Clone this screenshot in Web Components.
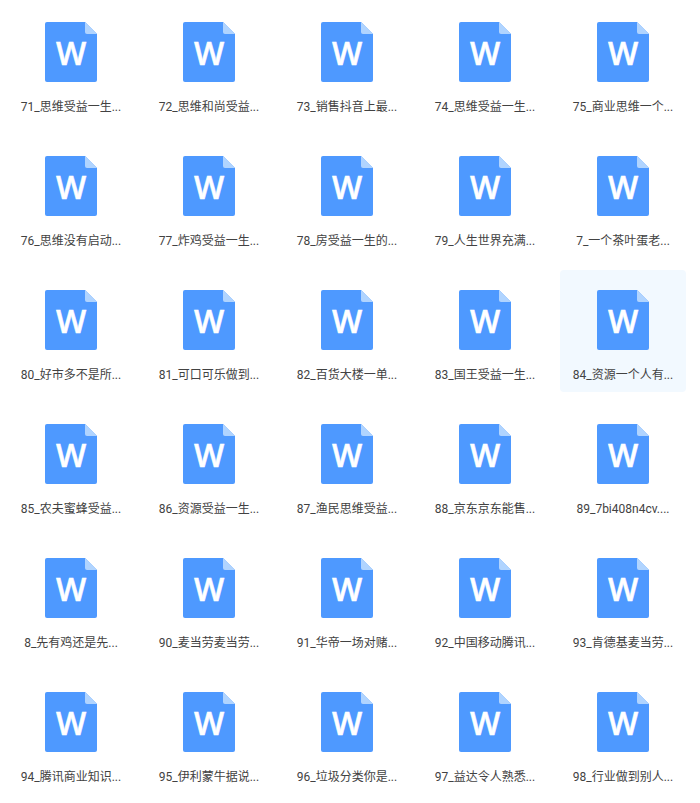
<!DOCTYPE html>
<html lang="zh">
<head>
<meta charset="utf-8">
<title>文件列表</title>
<style>
  html, body { margin: 0; background: #fff; overflow: hidden; }
</style>
</head>
<body>
<file-grid>
  <file-item name="71_思维受益一生..."></file-item>
  <file-item name="72_思维和尚受益..."></file-item>
  <file-item name="73_销售抖音上最..."></file-item>
  <file-item name="74_思维受益一生..."></file-item>
  <file-item name="75_商业思维一个..."></file-item>
  <file-item name="76_思维没有启动..."></file-item>
  <file-item name="77_炸鸡受益一生..."></file-item>
  <file-item name="78_房受益一生的..."></file-item>
  <file-item name="79_人生世界充满..."></file-item>
  <file-item name="7_一个茶叶蛋老..."></file-item>
  <file-item name="80_好市多不是所..."></file-item>
  <file-item name="81_可口可乐做到..."></file-item>
  <file-item name="82_百货大楼一单..."></file-item>
  <file-item name="83_国王受益一生..."></file-item>
  <file-item name="84_资源一个人有..." active></file-item>
  <file-item name="85_农夫蜜蜂受益..."></file-item>
  <file-item name="86_资源受益一生..."></file-item>
  <file-item name="87_渔民思维受益..."></file-item>
  <file-item name="88_京东京东能售..."></file-item>
  <file-item name="89_7bi408n4cv...."></file-item>
  <file-item name="8_先有鸡还是先..."></file-item>
  <file-item name="90_麦当劳麦当劳..."></file-item>
  <file-item name="91_华帝一场对赌..."></file-item>
  <file-item name="92_中国移动腾讯..."></file-item>
  <file-item name="93_肯德基麦当劳..."></file-item>
  <file-item name="94_腾讯商业知识..."></file-item>
  <file-item name="95_伊利蒙牛据说..."></file-item>
  <file-item name="96_垃圾分类你是..."></file-item>
  <file-item name="97_益达令人熟悉..."></file-item>
  <file-item name="98_行业做到别人..."></file-item>
</file-grid>

<script>
/**
 * Word document icon, blue sheet with a folded corner
 */
class WordIcon extends HTMLElement {
  constructor() {
    super();
    this.attachShadow({ mode: 'open' });
    this.shadowRoot.innerHTML = `
      <style>
        :host {
          display: block;
          width: 52px;
          height: 60px;
        }
        svg {
          display: block;
        }
        text {
          font-family: "Open Sans", sans-serif;
          font-size: 32px;
          font-weight: 600;
          fill: #fff;
          stroke: #fff;
          stroke-width: 0.5px;
        }
      </style>
      <svg width="52" height="60" viewBox="0 0 52 60">
        <path d="M2 0H40L52 12V58a2 2 0 0 1-2 2H2a2 2 0 0 1-2-2V2a2 2 0 0 1 2-2z" fill="#4e99ff"/>
        <path d="M40 0L52 12H42a2 2 0 0 1-2-2z" fill="#b0d4ff"/>
        <text x="26" y="43" text-anchor="middle">W</text>
      </svg>
    `;
  }
}

/**
 * A single file in the grid
 *
 * @attr {string} name - The (already shortened) file name
 * @attr {boolean} active - Draws the pale hover background
 */
class FileItem extends HTMLElement {
  constructor() {
    super();
    this.attachShadow({ mode: 'open' });
  }

  connectedCallback() {
    const name = this.getAttribute('name') || '';
    this.shadowRoot.innerHTML = `
      <style>
        :host {
          display: flex;
          flex-direction: column;
          align-items: center;
          box-sizing: border-box;
          height: 122px;
          padding-top: 20px;
          border-radius: 4px;
        }
        :host([active]) {
          background: #f2f9ff;
        }
        .name {
          margin-top: 14px;
          height: 22px;
          line-height: 22px;
          font-size: 12px;
          color: #424242;
          white-space: nowrap;
        }
      </style>
      <word-icon></word-icon>
      <div class="name">${name}</div>
    `;
  }
}

class FileGrid extends HTMLElement {
  constructor() {
    super();
    this.attachShadow({ mode: 'open' });
    this.shadowRoot.innerHTML = `
      <style>
        :host {
          display: grid;
          grid-template-columns: repeat(5, 126px);
          gap: 12px;
          padding: 2px 0 0 8px;
          font-family: Roboto, "Noto Sans CJK SC", sans-serif;
        }
      </style>
      <slot></slot>
    `;
  }
}

customElements.define('word-icon', WordIcon);
customElements.define('file-item', FileItem);
customElements.define('file-grid', FileGrid);
</script>
</body>
</html>
